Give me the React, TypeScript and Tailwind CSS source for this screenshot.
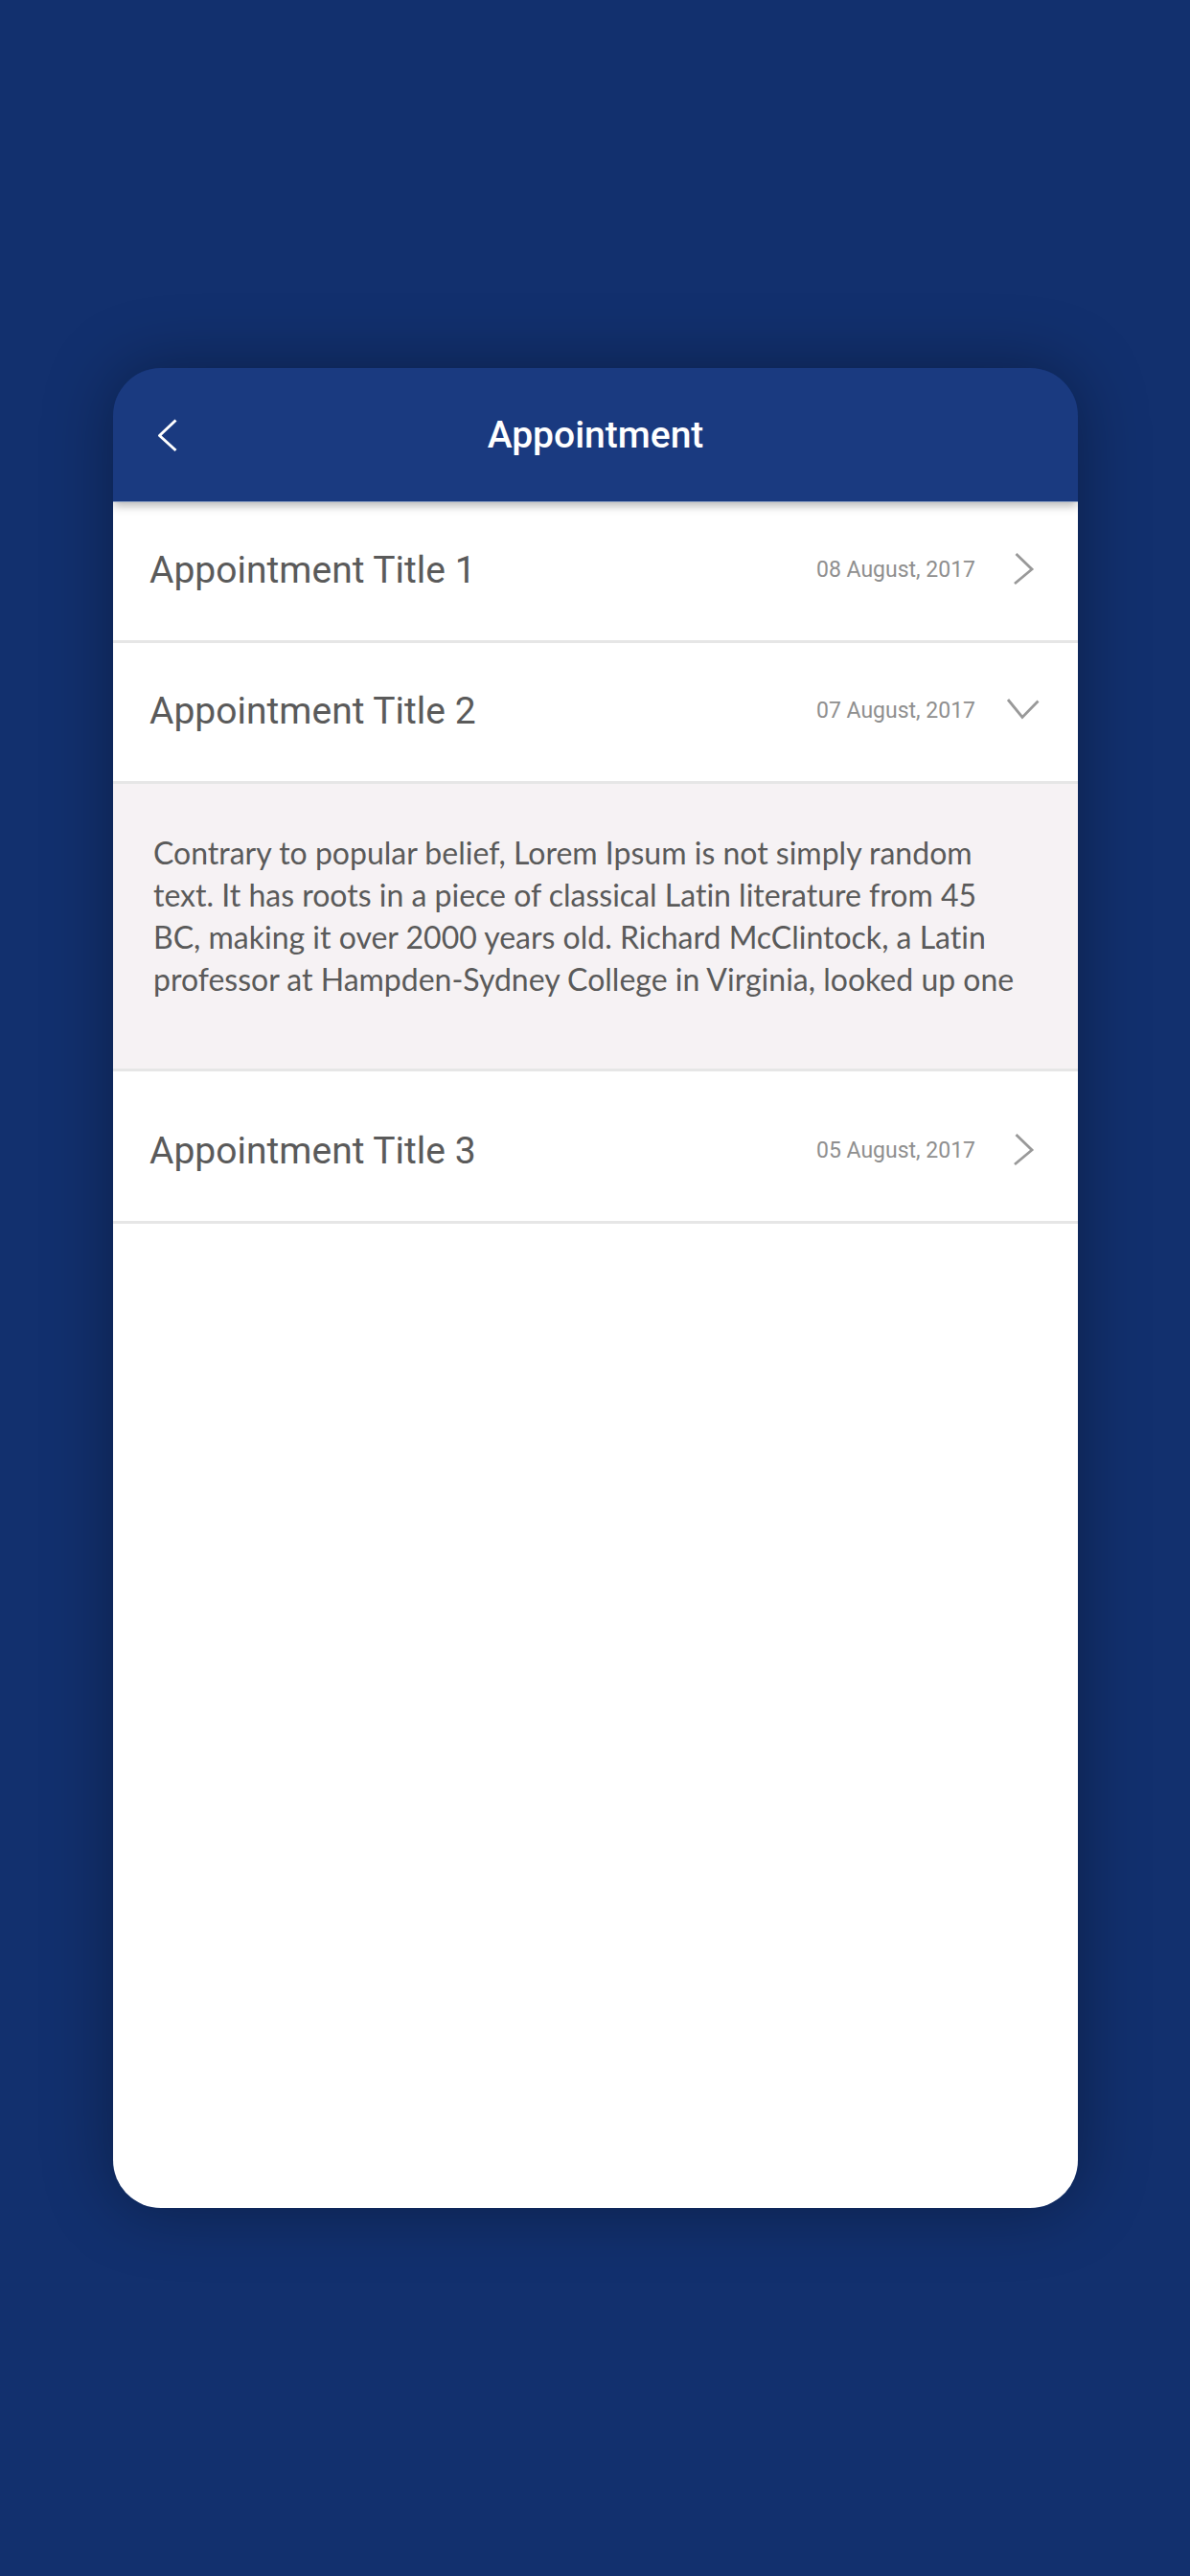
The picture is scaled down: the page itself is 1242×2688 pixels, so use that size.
import { useState } from "react";
import clsx from "clsx";

const appointments = [
  { id: 1, title: "Appointment Title 1", date: "08 August, 2017", lines: [] },
  {
    id: 2,
    title: "Appointment Title 2",
    date: "07 August, 2017",
    lines: [
      "Contrary to popular belief, Lorem Ipsum is not simply random",
      "text. It has roots in a piece of classical Latin literature from 45",
      "BC, making it over 2000 years old. Richard McClintock, a Latin",
      "professor at Hampden-Sydney College in Virginia, looked up one",
    ],
  },
  { id: 3, title: "Appointment Title 3", date: "05 August, 2017", lines: [] },
];

function BackIcon() {
  return (
    <svg className="w-9 h-9" viewBox="0 0 36 36" fill="none" stroke="currentColor" strokeWidth="3" aria-hidden="true">
      <path d="M27.5 2.5L10.5 18.5L27.5 34" strokeLinejoin="round" />
    </svg>
  );
}

function RowIcon({ open }: { open: boolean }) {
  return (
    <svg className="w-9 h-9" viewBox="0 0 36 36" fill="none" stroke="#999999" strokeWidth="2.8" aria-hidden="true">
      {open ? <path d="M2 6L17 24.5L33.5 7.5" /> : <path d="M10.5 1L27 17L9 32" />}
    </svg>
  );
}

export default function App() {
  const [openId, setOpenId] = useState<number | null>(2);

  return (
    <div className="min-h-screen flex flex-col pl-[118px] pr-[117px] py-96 bg-[#12306e] font-['Roboto',sans-serif]">
      <main className="flex-1 flex flex-col rounded-[50px] overflow-hidden shadow-[0_0_70px_rgba(0,0,0,0.35)]">
        {/* Header */}
        <header className="relative z-10 grid grid-cols-[1fr_auto_1fr] items-center h-[140px] px-[38px] bg-[#1a3a80] border-b border-[#8498bd] text-white shadow-[0_5px_9px_-1px_rgba(0,0,0,0.28)]">
          <button type="button" aria-label="Back" className="justify-self-start">
            <BackIcon />
          </button>
          <h1 className="text-[39px] leading-[48px] font-medium">Appointment</h1>
        </header>

        {/* Appointments */}
        <ul className="flex-1 bg-white">
          {appointments.map((item) => {
            const open = item.id === openId;
            return (
              <li key={item.id}>
                <button
                  type="button"
                  aria-expanded={open}
                  onClick={() => setOpenId(open ? null : item.id)}
                  className={clsx(
                    "w-full flex items-center pl-[38px] pr-[39px] pb-[49px] border-b-3 border-[#e6e6e6] text-left",
                    item.id === 3 ? "pt-[59px]" : "pt-[47px]"
                  )}
                >
                  <span className="flex-1 text-[39px] leading-[48px] text-[#5a5a5a]">{item.title}</span>
                  <span className="mr-8 text-[23px] leading-[48px] text-[#8f8f8f]">{item.date}</span>
                  <RowIcon open={open} />
                </button>
                {open && (
                  <div className="pl-[42px] pr-10 pt-[50px] pb-[71px] bg-[#f6f2f4] border-b-3 border-[#e6e6e6] font-['Lato',sans-serif] text-[32px] leading-[44px] text-[#5a5a5a] [font-variant-ligatures:none]">
                    {item.lines.map((line) => (
                      <p key={line}>{line}</p>
                    ))}
                  </div>
                )}
              </li>
            );
          })}
        </ul>
      </main>
    </div>
  );
}
